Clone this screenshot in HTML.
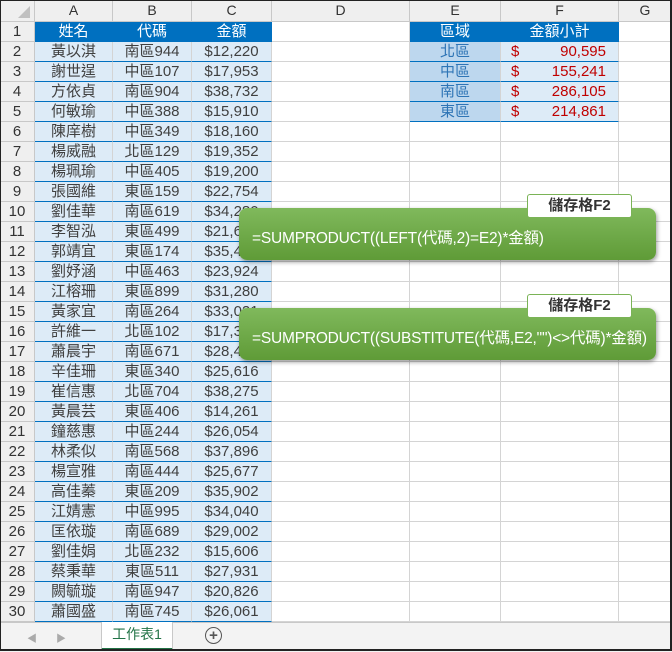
<!DOCTYPE html><html><head><meta charset="utf-8"><style>
body{margin:0;width:672px;height:651px;overflow:hidden;background:#fff;font-family:"Liberation Sans","Noto Sans CJK TC",sans-serif;position:relative}
table{border-collapse:separate;border-spacing:0;table-layout:fixed;position:absolute;left:0;top:0}
td{padding:0;height:19px;border-right:1px solid #d4d4d4;border-bottom:1px solid #d4d4d4;font-size:15px;color:#404040;text-align:center;white-space:nowrap;overflow:hidden;line-height:19px}
tr.h td{height:21px;background:#efefef;color:#333;font-size:14px;border-color:#c8c8c8}
td.r{background:#efefef;color:#333;border-color:#c8c8c8}
td.d{background:#ddebf7;border-bottom-color:#0070c0}
td.t{background:#0070c0;color:#fff;border-color:#0070c0}
td.e{background:#bdd7ee;color:#2e75b6;border-bottom-color:#0070c0}
td.f{background:#ddebf7;color:#c00000;border-bottom-color:#0070c0;text-align:right;padding-right:12px;position:relative}
td.f span{position:absolute;left:10px}
.co{position:absolute;left:239px;width:417px;height:52px;border-radius:8px;background:linear-gradient(#80b95c,#5f9b37);box-shadow:1px 2px 4px rgba(0,0,0,.4);color:#fff;font-size:15.5px;line-height:52px;padding-left:13px;padding-top:10px;box-sizing:border-box;white-space:nowrap;overflow:hidden;letter-spacing:-0.2px}
.co span{display:block;line-height:42px;margin-top:-10px;position:relative;top:8px}
.lb{position:absolute;left:527px;width:105px;height:24px;background:#fff;border:1px solid #7ab356;border-radius:3px;box-sizing:border-box;text-align:center;font-size:15px;font-weight:bold;color:#333;line-height:22px}
.tabs{position:absolute;left:0;top:622px;width:672px;height:29px;background:#f3f3f3;border-top:1px solid #c8c8c8}
.frame{position:absolute;left:0;top:0;width:672px;height:651px;box-sizing:border-box;border:1px solid #222;border-width:1px 2px 2px 1px;pointer-events:none}
</style></head><body>
<table>
<colgroup><col style="width:35px"><col style="width:78px"><col style="width:79px"><col style="width:80px"><col style="width:138px"><col style="width:91px"><col style="width:118px"><col style="width:53px"></colgroup>
<tr class="h"><td></td><td>A</td><td>B</td><td>C</td><td>D</td><td>E</td><td>F</td><td>G</td></tr>
<tr><td class="r">1</td><td class="t">姓名</td><td class="t">代碼</td><td class="t">金額</td><td></td><td class="t">區域</td><td class="t" style="text-align:center">金額小計</td><td></td></tr>
<tr><td class="r">2</td><td class="d">黃以淇</td><td class="d">南區944</td><td class="d">$12,220</td><td></td><td class="e">北區</td><td class="f"><span>$</span>90,595</td><td></td></tr>
<tr><td class="r">3</td><td class="d">謝世逞</td><td class="d">中區107</td><td class="d">$17,953</td><td></td><td class="e">中區</td><td class="f"><span>$</span>155,241</td><td></td></tr>
<tr><td class="r">4</td><td class="d">方依貞</td><td class="d">南區904</td><td class="d">$38,732</td><td></td><td class="e">南區</td><td class="f"><span>$</span>286,105</td><td></td></tr>
<tr><td class="r">5</td><td class="d">何敏瑜</td><td class="d">中區388</td><td class="d">$15,910</td><td></td><td class="e">東區</td><td class="f"><span>$</span>214,861</td><td></td></tr>
<tr><td class="r">6</td><td class="d">陳庠樹</td><td class="d">中區349</td><td class="d">$18,160</td><td></td><td></td><td></td><td></td></tr>
<tr><td class="r">7</td><td class="d">楊威融</td><td class="d">北區129</td><td class="d">$19,352</td><td></td><td></td><td></td><td></td></tr>
<tr><td class="r">8</td><td class="d">楊珮瑜</td><td class="d">中區405</td><td class="d">$19,200</td><td></td><td></td><td></td><td></td></tr>
<tr><td class="r">9</td><td class="d">張國維</td><td class="d">東區159</td><td class="d">$22,754</td><td></td><td></td><td></td><td></td></tr>
<tr><td class="r">10</td><td class="d">劉佳華</td><td class="d">南區619</td><td class="d">$34,280</td><td></td><td></td><td></td><td></td></tr>
<tr><td class="r">11</td><td class="d">李智泓</td><td class="d">東區499</td><td class="d">$21,616</td><td></td><td></td><td></td><td></td></tr>
<tr><td class="r">12</td><td class="d">郭靖宜</td><td class="d">東區174</td><td class="d">$35,418</td><td></td><td></td><td></td><td></td></tr>
<tr><td class="r">13</td><td class="d">劉妤涵</td><td class="d">中區463</td><td class="d">$23,924</td><td></td><td></td><td></td><td></td></tr>
<tr><td class="r">14</td><td class="d">江榕珊</td><td class="d">東區899</td><td class="d">$31,280</td><td></td><td></td><td></td><td></td></tr>
<tr><td class="r">15</td><td class="d">黃家宜</td><td class="d">南區264</td><td class="d">$33,021</td><td></td><td></td><td></td><td></td></tr>
<tr><td class="r">16</td><td class="d">許維一</td><td class="d">北區102</td><td class="d">$17,316</td><td></td><td></td><td></td><td></td></tr>
<tr><td class="r">17</td><td class="d">蕭晨宇</td><td class="d">南區671</td><td class="d">$28,433</td><td></td><td></td><td></td><td></td></tr>
<tr><td class="r">18</td><td class="d">辛佳珊</td><td class="d">東區340</td><td class="d">$25,616</td><td></td><td></td><td></td><td></td></tr>
<tr><td class="r">19</td><td class="d">崔信惠</td><td class="d">北區704</td><td class="d">$38,275</td><td></td><td></td><td></td><td></td></tr>
<tr><td class="r">20</td><td class="d">黃晨芸</td><td class="d">東區406</td><td class="d">$14,261</td><td></td><td></td><td></td><td></td></tr>
<tr><td class="r">21</td><td class="d">鐘慈惠</td><td class="d">中區244</td><td class="d">$26,054</td><td></td><td></td><td></td><td></td></tr>
<tr><td class="r">22</td><td class="d">林柔似</td><td class="d">南區568</td><td class="d">$37,896</td><td></td><td></td><td></td><td></td></tr>
<tr><td class="r">23</td><td class="d">楊宣雅</td><td class="d">南區444</td><td class="d">$25,677</td><td></td><td></td><td></td><td></td></tr>
<tr><td class="r">24</td><td class="d">高佳蓁</td><td class="d">東區209</td><td class="d">$35,902</td><td></td><td></td><td></td><td></td></tr>
<tr><td class="r">25</td><td class="d">江婧憲</td><td class="d">中區995</td><td class="d">$34,040</td><td></td><td></td><td></td><td></td></tr>
<tr><td class="r">26</td><td class="d">匡依璇</td><td class="d">南區689</td><td class="d">$29,002</td><td></td><td></td><td></td><td></td></tr>
<tr><td class="r">27</td><td class="d">劉佳娟</td><td class="d">北區232</td><td class="d">$15,606</td><td></td><td></td><td></td><td></td></tr>
<tr><td class="r">28</td><td class="d">蔡秉華</td><td class="d">東區511</td><td class="d">$27,931</td><td></td><td></td><td></td><td></td></tr>
<tr><td class="r">29</td><td class="d">闕毓璇</td><td class="d">南區947</td><td class="d">$20,826</td><td></td><td></td><td></td><td></td></tr>
<tr><td class="r">30</td><td class="d">蕭國盛</td><td class="d">南區745</td><td class="d">$26,061</td><td></td><td></td><td></td><td></td></tr>
</table>
<div style="position:absolute;left:0;top:0;width:34px;height:21px"><svg width="34" height="21"><polygon points="30,6 30,18 18,18" fill="#c0c0c0"/></svg></div>
<div class="co" style="top:208px;padding-top:0;line-height:62px">=SUMPRODUCT((LEFT(代碼,2)=E2)*金額)</div>
<div class="lb" style="top:194px">儲存格F2</div>
<div class="co" style="top:308px;padding-top:0;line-height:62px">=SUMPRODUCT((SUBSTITUTE(代碼,E2,"")&lt;&gt;代碼)*金額)</div>
<div class="lb" style="top:294px">儲存格F2</div>
<div class="tabs">
<span style="position:absolute;left:27px;top:7px;color:#aaa;font-size:10px">◀</span>
<span style="position:absolute;left:56px;top:7px;color:#aaa;font-size:10px">▶</span>
<div style="position:absolute;left:101px;top:-1px;width:70px;height:26px;background:#fff;border-left:1px solid #c8c8c8;border-right:1px solid #c8c8c8;border-bottom:3px solid #217346;text-align:center;line-height:25px;font-size:14px;color:#217346">工作表1</div>
<div style="position:absolute;left:205px;top:4px;width:15px;height:15px;border:1.5px solid #555;border-radius:50%;text-align:center;line-height:15px;font-size:15px;color:#555;font-weight:bold">+</div>
</div>
<div class="frame"></div>
</body></html>
